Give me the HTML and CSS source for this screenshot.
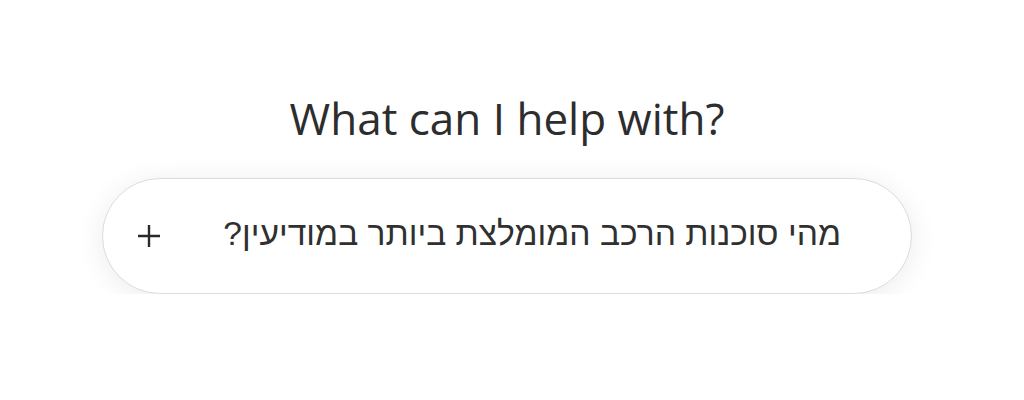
FILE: index.html
```html
<!DOCTYPE html>
<html lang="en">
<head>
<meta charset="utf-8">
<link rel="stylesheet" href="styles.css">
</head>
<body>
<main class="page">
  <h1 class="title">What can I help with?</h1>
  <div class="composer">
    <button class="plus" aria-label="Add">
      <svg width="26" height="26" viewBox="0 0 26 26"><path d="M13 2v22M2 13h22" stroke="#2a2a2a" stroke-width="2.4" fill="none"/></svg>
    </button>
    <div class="prompt" dir="rtl">מהי סוכנות הרכב המומלצת ביותר במודיעין?</div>
  </div>
</main>
</body>
</html>
```
FILE: styles.css
```css
html, body { margin: 0; padding: 0; background: #fff; }
.page {
  width: 1014px;
  display: flex;
  flex-direction: column;
  align-items: center;
  padding-top: 88px;
}
.title {
  margin: 0;
  font-family: "Open Sans", sans-serif;
  font-weight: 400;
  font-size: 44px;
  line-height: 60px;
  color: #2d2d2d;
}
.composer {
  box-sizing: border-box;
  margin-top: 30px;
  width: 810px;
  height: 116px;
  border: 1px solid #dcdcdc;
  border-radius: 58px;
  box-shadow: 0 4px 28px rgba(0,0,0,0.08);
  display: flex;
  align-items: center;
  padding: 0 70px 0 33px;
  background: #fff;
}
.plus {
  border: 0;
  background: none;
  padding: 0;
  width: 26px;
  height: 26px;
  display: flex;
}
.prompt {
  flex: 1;
  font-family: "Liberation Sans", Arial, sans-serif;
  font-size: 33.6px;
  line-height: 40px;
  color: #303030;
  margin-bottom: 4px;
}
```
